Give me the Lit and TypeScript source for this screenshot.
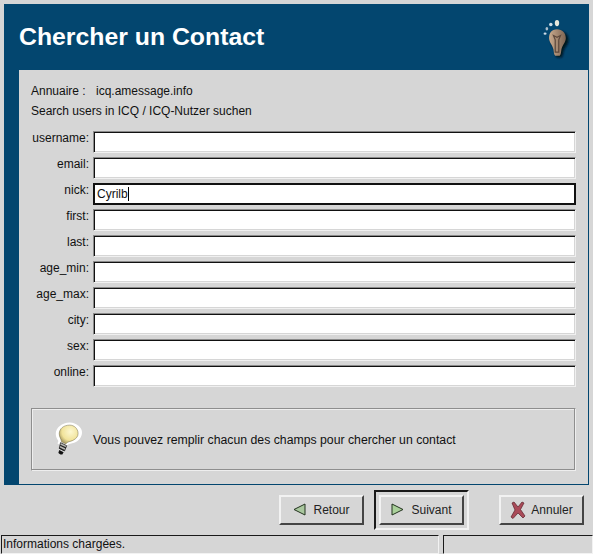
import { LitElement, html, css, svg } from "lit";
import { customElement } from "lit/decorators.js";

const fields: [string, string][] = [
  ["username", ""], ["email", ""], ["nick", "Cyrilb"], ["first", ""], ["last", ""],
  ["age_min", ""], ["age_max", ""], ["city", ""], ["sex", ""], ["online", ""],
];

const bulb = svg`<svg class="bulb" width="28" height="36" viewBox="0 0 32 40">
  <defs><radialGradient id="g" cx="0.6" cy="0.35" r="0.65"><stop offset="0" stop-color="#fdf8d2"/><stop offset="0.7" stop-color="#f1e39a"/><stop offset="1" stop-color="#b0a266"/></radialGradient></defs>
  <path d="M18 0C9 0 2 6 2 13c0 4 2 6 3 8l-1 3 9 5 2-3c2-2 5-2 8-3 6-2 9-7 9-12C32 6 26 0 18 0z" fill="#fff"/>
  <path d="M18 3C11 3 6 7 6 13c0 4 2.500 6 2.500 9l5 2.500c2-3 5-2.500 8-4 4-2 6-4.500 6-8C27.500 7 23 3 18 3z" fill="url(#g)" stroke="#77704a" stroke-width=".6"/>
  <path d="M7.500 23l7 3.500-2.500 6-6-3z" fill="#b9b9b4" stroke="#333" stroke-width="1"/>
  <path d="M7 26l6.500 3M6 29l6 3" stroke="#222" stroke-width="1.300"/>
  <path d="M6 31.500l5 2.500-1.500 2.500c-2 .5-3.500-.5-4.500-2z" fill="#111"/>
</svg>`;

const headIcon = svg`<svg width="30" height="44" viewBox="0 0 34 48">
  <defs><filter id="b"><feGaussianBlur stdDeviation="1.500"/></filter><filter id="s"><feGaussianBlur stdDeviation=".45"/></filter>
  <linearGradient id="h" x1="0" x2="1"><stop offset="0" stop-color="#c9aa8d"/><stop offset="1" stop-color="#7d6453"/></linearGradient></defs>
  <path d="M19 15c7 0 11 4 11 10 0 6-5 8-6 14-.5 4-1 6-3 6h-3c-2 0-2.500-2-3-6-1-6-5-8-5-14 0-6 3-10 9-10z" fill="#04121f" filter="url(#b)"/>
  <g filter="url(#s)">
  <path d="M17 13c6 0 10 4 10 10 0 5-4 8-5 13-.5 3-.5 6-2 7h-5c-1.500-1-1.500-4-2-7-1-5-5-8-5-13 0-6 3-10 9-10z" fill="url(#h)"/>
  <path d="M13 20l4 2 4-2-2 5v14h-4V25z" fill="none" stroke="#5e493c" stroke-width="1.400"/>
  <ellipse cx="17" cy="6" rx="2.500" ry="3.500" fill="#e8e8dc"/>
  <ellipse cx="10" cy="7.500" rx="2" ry="2" fill="#cfdde8"/>
  <ellipse cx="5.500" cy="12.500" rx="1.500" ry="2" fill="#aebfcc"/>
  <ellipse cx="3.500" cy="18" rx="1.700" ry="1.300" fill="#cfdde8"/>
  </g>
</svg>`;

@customElement("app-root")
export class AppRoot extends LitElement {
  static styles = css`
    :host { display: block; width: 593px; height: 554px; background: #d6d6d6; overflow: hidden;
      font-family: "Liberation Sans", Arial, sans-serif; font-size: 12px; color: #111; }
    * { box-sizing: border-box; }
    .root { display: flex; flex-direction: column; height: 554px; }
    .frame { margin: 4px 4px 0 4px; height: 481px; background: #03466f; display: flex; flex-direction: column; }
    .head { height: 66px; flex: none; display: flex; align-items: center; justify-content: space-between; padding: 0 17px 0 15px; }
    .head h1 { margin: 0; font-size: 24.8px; font-weight: 700; color: #fff; line-height: 30px; }
    .head svg { margin-top: 3px; }
    .panel { flex: 1; margin: 0 1px 1px 15px; background: #d6d6d6; padding: 11px 12px 13px 12px; display: flex; flex-direction: column; }
    .meta { line-height: 20px; }
    .meta .row { display: flex; }
    .meta .k { width: 65px; }
    .fields { margin-top: 10px; display: grid; grid-template-columns: 58px 1fr; row-gap: 4px; column-gap: 4px; }
    label { text-align: right; line-height: 14px; height: 22px; }
    .inp { height: 22px; background: #fff; border: 1px solid; border-color: #8a8a8a #f0f0f0 #f0f0f0 #8a8a8a; box-shadow: inset 1px 1px 0 #111, inset -1px -1px 0 #d6d6d6; padding-left: 3px; display: flex; align-items: center; }
    .inp.focus { border: 2px solid #111; box-shadow: none; padding-left: 2px; }
    .caret { width: 1px; height: 14px; background: #000; }
    .info { margin-top: auto; height: 63px; border: 1px solid #8e8e8e; border-right-color: #eee; border-bottom-color: #eee; box-shadow: inset -1px -1px 0 #8e8e8e, inset 1px 1px 0 #eee; display: flex; align-items: center; gap: 11px; padding: 0 0 0 22px; font-size: 12.27px; }
    .foot { flex: none; display: flex; justify-content: flex-end; align-items: center; height: 49px; padding-right: 9px; }
    .btn { height: 30px; width: 85px; flex: none; border: 2px solid; border-color: #f2f2f2 #444 #444 #f2f2f2; display: flex; align-items: center; justify-content: center; gap: 7px; color: #222; background: #d6d6d6; }
    .btn.x { gap: 5px; }
    .def { border: 2px solid; border-color: #1a1a1a #f2f2f2 #f2f2f2 #1a1a1a; padding: 3px; margin: 0 30px 0 10px; width: 95px; height: 40px; flex: none; }
    .status { flex: none; height: 19px; display: flex; margin-left: 1px; margin-top: auto; }
    .cell { height: 19px; border: 1px solid; border-color: #1a1a1a #f2f2f2 #f2f2f2 #1a1a1a; line-height: 17px; padding-left: 1px; }
    .cell.a { width: 438px; }
    .cell.b { margin-left: 4px; flex: 1; }
  `;

  render() {
    return html`<div class="root">
      <div class="frame">
        <div class="head"><h1>Chercher un Contact</h1>${headIcon}</div>
        <div class="panel">
          <div class="meta">
            <div class="row"><span class="k">Annuaire :</span><span>icq.amessage.info</span></div>
            <div class="row">Search users in ICQ / ICQ-Nutzer suchen</div>
          </div>
          <div class="fields">
            ${fields.map(([n, v]) => html`<label>${n}:</label>
              <div class="inp ${v ? "focus" : ""}">${v}${v ? html`<span class="caret"></span>` : ""}</div>`)}
          </div>
          <div class="info">${bulb}<span>Vous pouvez remplir chacun des champs pour chercher un contact</span></div>
        </div>
      </div>
      <div class="foot">
        <div class="btn"><svg width="13" height="13" viewBox="0 0 13 13"><path d="M12 1v11L1 6.500z" fill="#a9c79e" stroke="#23331f"/></svg>Retour</div>
        <div class="def"><div class="btn"><svg width="13" height="13" viewBox="0 0 13 13"><path d="M1 1v11l11-5.500z" fill="#a9d09a" stroke="#23331f"/></svg>Suivant</div></div>
        <div class="btn x"><svg width="16" height="18" viewBox="0 0 16 18"><path d="M2 2l2-1 4 5 4-5 2 1-3.500 6.500L15 15l-2 2-5-5-5 5.500L1 16l4-7z" fill="#a94a58" stroke="#5a1f28" stroke-width=".7"/></svg>Annuler</div>
      </div>
      <div class="status"><div class="cell a">Informations chargées.</div><div class="cell b"></div></div>
    </div>`;
  }
}
